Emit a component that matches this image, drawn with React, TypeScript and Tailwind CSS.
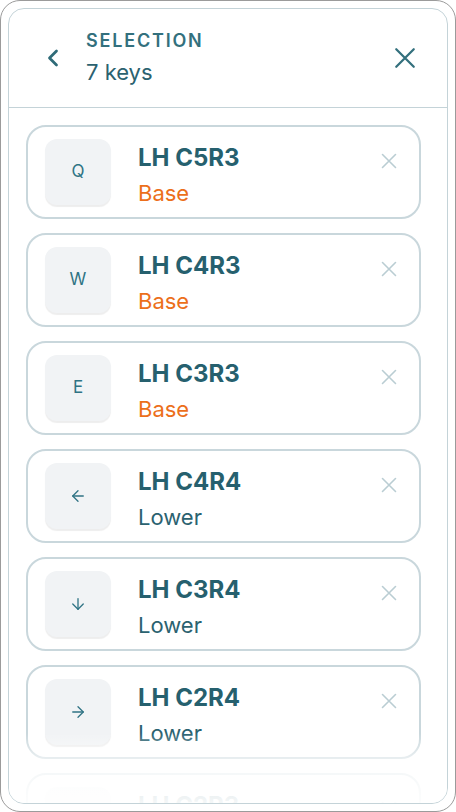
import React from "react";
import { ArrowLeft, ArrowDown, ArrowRight } from "lucide-react";

type Key = {
    cap: React.ReactNode;
    name: string;
    layer: string;
};

const capIcon = "text-[#2f7384]";

const keys: Key[] = [
    { cap: "Q", name: "LH C5R3", layer: "Base" },
    { cap: "W", name: "LH C4R3", layer: "Base" },
    { cap: "E", name: "LH C3R3", layer: "Base" },
    { cap: <ArrowLeft size={18} strokeWidth={1.75} className={capIcon} />, name: "LH C4R4", layer: "Lower" },
    { cap: <ArrowDown size={18} strokeWidth={1.75} className={capIcon} />, name: "LH C3R4", layer: "Lower" },
    { cap: <ArrowRight size={18} strokeWidth={1.75} className={capIcon} />, name: "LH C2R4", layer: "Lower" },
    { cap: "R", name: "LH C2R3", layer: "Base" },
];

const KeyRow = ({ item }: { item: Key }) => {
    const isBase = item.layer === "Base";
    return (
        <div className="relative flex h-[94px] w-[395px] shrink-0 items-start rounded-[20px] border-2 border-[#c9d7dc] bg-white pl-[17px] pt-[12px]">
            <div className="flex h-[66px] w-[66px] items-center justify-center rounded-[12px] bg-[#f1f3f5] text-[17px] text-[#2f7384] shadow-[0_2px_1px_rgba(0,0,0,0.07)]">
                {item.cap}
            </div>
            <div className="ml-[27px] flex flex-col pt-[4px]">
                <span className="text-[24px] font-bold leading-[29px] text-[#26606e]">
                    {item.name}
                </span>
                <span
                    className={`mt-[8px] text-[22px] leading-[27px] ${
                        isBase ? "text-[#ec6f1b]" : "text-[#2b6270]"
                    }`}
                >
                    {item.layer}
                </span>
            </div>
            <button className="absolute right-[18px] top-[22px] h-6 w-6">
                <svg viewBox="0 0 24 24" className="h-6 w-6" fill="none" stroke="#bacdd3" strokeWidth="1.6" strokeLinecap="round">
                    <path d="M5.5 5.5 18.5 18.5M18.5 5.5 5.5 18.5" />
                </svg>
            </button>
        </div>
    );
};

const App = () => {
    return (
        <div
            className="h-[812px] w-[456px] overflow-hidden rounded-[20px] border-[1.5px] border-[#9b9b9b] bg-white p-[7px]"
            style={{ fontFamily: "Inter, 'Noto Sans', sans-serif" }}
        >
            <div className="relative flex h-full flex-col overflow-hidden rounded-[16px] border-[1.5px] border-[#c4d3d8] bg-white">
                {/* header */}
                <div className="flex h-[99px] shrink-0 items-center border-b-[1.5px] border-[#c4d3d8] pl-[32px] pr-[30px]">
                    <svg viewBox="0 0 24 24" className="h-6 w-6" fill="none" stroke="#2f6b78" strokeWidth="2.75" strokeLinecap="round" strokeLinejoin="round">
                        <path d="M15.5 5 8.5 12l7 7" />
                    </svg>
                    <div className="ml-[21px] flex flex-col">
                        <span className="text-[18px] font-semibold uppercase leading-[22px] tracking-[0.1em] text-[#33707d]">
                            Selection
                        </span>
                        <span className="mt-[6px] text-[22px] leading-[28px] text-[#2b6270]">
                            7 keys
                        </span>
                    </div>
                    <svg viewBox="0 0 24 24" className="ml-auto h-6 w-6" fill="none" stroke="#33707d" strokeWidth="2.25" strokeLinecap="round">
                        <path d="M3.25 3.25 20.75 20.75M20.75 3.25 3.25 20.75" />
                    </svg>
                </div>

                {/* key list */}
                <div className="flex flex-col gap-[14px] pl-[17px] pt-[17px]">
                    {keys.map((k) => (
                        <KeyRow key={k.name} item={k} />
                    ))}
                </div>

                {/* fade at the bottom */}
                <div className="pointer-events-none absolute bottom-0 left-0 right-0 h-[70px] bg-gradient-to-b from-white/0 via-white/80 to-white/95" />
            </div>
        </div>
    );
};

export default App;
